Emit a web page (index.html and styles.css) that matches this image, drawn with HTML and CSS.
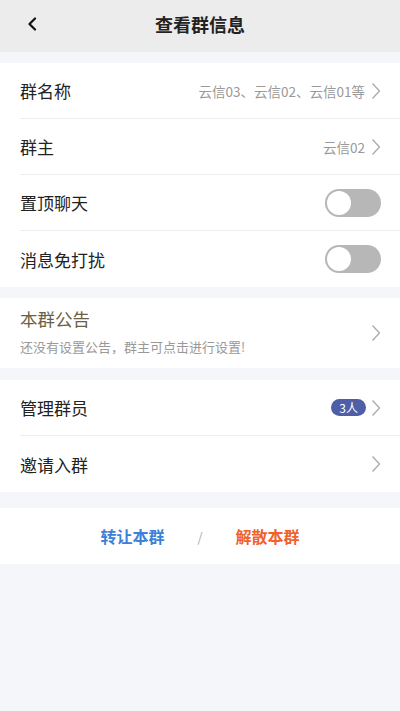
FILE: index.html
```html
<!DOCTYPE html>
<html lang="zh-CN">
<head>
  <meta charset="UTF-8" />
  <title>查看群信息</title>
  <link rel="stylesheet" href="styles.css">
</head>
<body>
  <header class="top-bar">
    <span class="back">
      <svg width="12" height="14" viewBox="0 0 12 14"><path d="M9 1.5 3.5 7 9 12.5" fill="none" stroke="#111" stroke-width="2.2" stroke-linecap="round" stroke-linejoin="round"/></svg>
    </span>
    <h1 class="title">查看群信息</h1>
  </header>

  <section class="group">
    <div class="row">
      <span class="label">群名称</span>
      <span class="value">云信03、云信02、云信01等</span>
      <svg class="arrow" width="10" height="18" viewBox="0 0 10 18"><path d="M1.5 1.5 8.5 9 1.5 16.5" fill="none" stroke="#aaa" stroke-width="1.3"/></svg>
    </div>
    <div class="row">
      <span class="label">群主</span>
      <span class="value">云信02</span>
      <svg class="arrow" width="10" height="18" viewBox="0 0 10 18"><path d="M1.5 1.5 8.5 9 1.5 16.5" fill="none" stroke="#aaa" stroke-width="1.3"/></svg>
    </div>
    <div class="row">
      <span class="label">置顶聊天</span>
      <span class="switch"><span class="knob"></span></span>
    </div>
    <div class="row">
      <span class="label">消息免打扰</span>
      <span class="switch"><span class="knob"></span></span>
    </div>
  </section>

  <section class="group notice-group">
    <div class="row notice">
      <div class="notice-text">
        <div class="notice-title">本群公告</div>
        <div class="notice-desc">还没有设置公告，群主可点击进行设置!</div>
      </div>
      <svg class="arrow" width="10" height="18" viewBox="0 0 10 18"><path d="M1.5 1.5 8.5 9 1.5 16.5" fill="none" stroke="#aaa" stroke-width="1.3"/></svg>
    </div>
  </section>

  <section class="group members">
    <div class="row">
      <span class="label">管理群员</span>
      <span class="badge">3人</span>
      <svg class="arrow" width="10" height="18" viewBox="0 0 10 18"><path d="M1.5 1.5 8.5 9 1.5 16.5" fill="none" stroke="#aaa" stroke-width="1.3"/></svg>
    </div>
    <div class="row">
      <span class="label">邀请入群</span>
      <svg class="arrow" width="10" height="18" viewBox="0 0 10 18"><path d="M1.5 1.5 8.5 9 1.5 16.5" fill="none" stroke="#aaa" stroke-width="1.3"/></svg>
    </div>
  </section>

  <section class="group actions">
    <span class="action transfer">转让本群</span>
    <span class="slash">/</span>
    <span class="action dismiss">解散本群</span>
  </section>
</body>
</html>
```

FILE: styles.css
```css
body {
  margin: 0;
  background: #f5f6fa;
  font-family: "Noto Sans CJK SC", "Noto Sans", sans-serif;
  color: #222;
}

.top-bar {
  height: 52px;
  background: #ececec;
  display: flex;
  align-items: center;
  justify-content: center;
  position: relative;
  box-sizing: border-box;
  padding-bottom: 4px;
}

.back {
  position: absolute;
  left: 26px;
  top: 17px;
  display: flex;
}

.title {
  margin: 0;
  font-size: 18px;
  font-weight: bold;
  color: #222;
}

.group {
  background: #fff;
  margin-top: 11px;
}

.row {
  height: 56px;
  box-sizing: border-box;
  display: flex;
  align-items: center;
  margin-left: 20px;
  padding-right: 19px;
  border-bottom: 1px solid #eeeeee;
}

.row:last-child {
  border-bottom: none;
}

.label {
  font-size: 17px;
  flex: 1;
}

.value {
  font-size: 13.5px;
  color: #999;
  margin-right: 6px;
}

.arrow {
  display: block;
}

.switch {
  width: 56px;
  height: 28px;
  border-radius: 14px;
  background: #b7b7b7;
  display: flex;
  align-items: center;
  padding-left: 2px;
  box-sizing: border-box;
}

.knob {
  width: 24px;
  height: 24px;
  border-radius: 50%;
  background: #fff;
}

.notice {
  height: 70px;
}

.notice-text {
  flex: 1;
  margin-top: -4px;
}

.notice-title {
  font-size: 17.5px;
  color: #6b5f45;
  line-height: 24px;
}

.notice-desc {
  font-size: 13px;
  color: #999;
  margin-top: 6px;
}

.members {
  margin-top: 12px;
}

.badge {
  background: #4e5fa8;
  color: #fff;
  font-size: 12px;
  line-height: 17px;
  padding: 0 8px;
  border-radius: 9px;
  margin-right: 5px;
}

.actions {
  margin-top: 16px;
  height: 56px;
  display: flex;
  align-items: center;
  justify-content: center;
}

.action {
  font-size: 16px;
  font-weight: bold;
}

.transfer {
  color: #3d80d8;
}

.dismiss {
  color: #f0612d;
}

.slash {
  color: #aaa;
  font-size: 13px;
  margin: 0 33px;
}
```
